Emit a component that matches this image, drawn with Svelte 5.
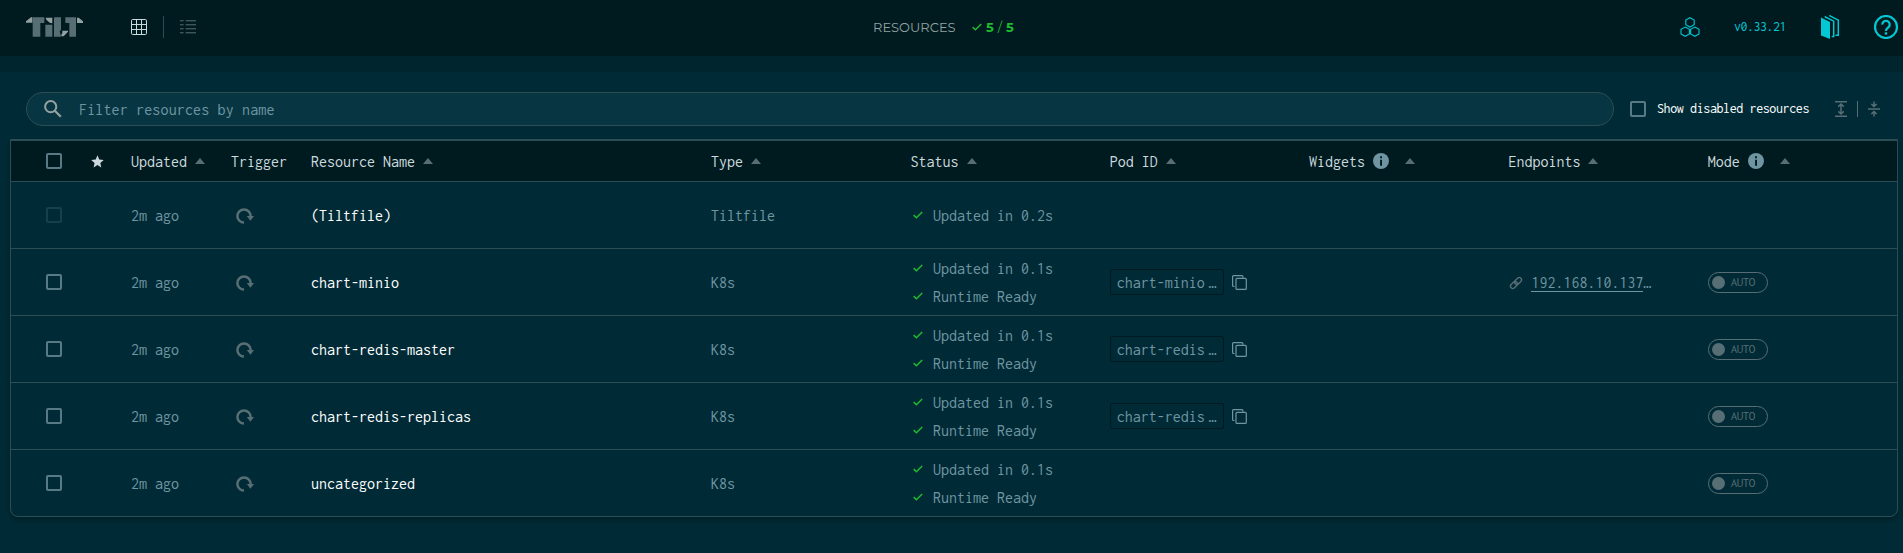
<script>
  const columns = [
    { label: 'Updated', sort: true },
    { label: 'Trigger' },
    { label: 'Resource Name', sort: true },
    { label: 'Type', sort: true },
    { label: 'Status', sort: true },
    { label: 'Pod ID', sort: true },
    { label: 'Widgets', info: true, sort: true },
    { label: 'Endpoints', sort: true },
    { label: 'Mode', info: true, sort: true }
  ];
  const rows = [
    { name: '(Tiltfile)', type: 'Tiltfile', status: ['Updated in 0.2s'], disabled: true },
    { name: 'chart-minio', type: 'K8s', status: ['Updated in 0.1s', 'Runtime Ready'], pod: 'chart-minio', endpoint: '192.168.10.137', auto: true },
    { name: 'chart-redis-master', type: 'K8s', status: ['Updated in 0.1s', 'Runtime Ready'], pod: 'chart-redis', auto: true },
    { name: 'chart-redis-replicas', type: 'K8s', status: ['Updated in 0.1s', 'Runtime Ready'], pod: 'chart-redis', auto: true },
    { name: 'uncategorized', type: 'K8s', status: ['Updated in 0.1s', 'Runtime Ready'], auto: true }
  ];
</script>

{#snippet check()}
  <svg class="check" width="10" height="8" viewBox="0 0 10 8"><path d="M.7 4.1 3.4 6.7 9.2 1" fill="none" stroke="#20ba31" stroke-width="1.5" /></svg>
{/snippet}

<div class="page">
  <header>
    <svg class="logo" width="58" height="20" viewBox="78 51 174 60" aria-label="Tilt">
      <path fill="#586e75" d="M98 52h35v17h-12v41H98zM136 74h21v36h-21zM162 52h21v38l-4 4 4 14v2h-21zM196 52h32v58h-20V69h-12z" />
      <path fill="#93a1a1" d="M78 68v-4l15-12h4v16zM137 53h20v17l-8-2-10-9zM187 92h17v3l-13 14h-7v-5l3-4zM231 53h5l13 11v5h-18z" />
    </svg>
    <nav>
      <svg width="16" height="16" viewBox="0 0 16 16" fill="none" stroke="#ccdade"><rect x=".5" y=".5" width="15" height="15" rx="1.2" /><path d="M5.5.5v15M10.5.5v15M.5 5.5h15M.5 10.5h15" /></svg>
      <i class="navline"></i>
      <svg width="16" height="14" viewBox="0 0 16 14" stroke="#586e75"><path d="M0 .8h3.6M5.6.8H16M0 4.8h3.6M5.6 4.8H16M0 8.8h3.6M5.6 8.8H16M0 12.8h3.6M5.6 12.8H16" /></svg>
    </nav>
    <div class="summary">
      <span class="title">RESOURCES</span>
      {@render check()}
      <span class="count"><b>5</b><em>/</em><b>5</b></span>
    </div>
    <div class="tools">
      <svg width="20" height="20" viewBox="0 0 20 20" fill="none" stroke="#03c7d3" stroke-width="1.1"><path d="M10 .7 14.2 3v4.7L10 10 5.8 7.700V3zM5.200 10.100 9.400 12.300v4.700L5.200 19.300 1 17v-4.700zM14.800 10.100 19 12.300v4.700l-4.200 2.300-4.200-2.300v-4.700z" /></svg>
      <span class="version">v0.33.21</span>
      <svg class="book" width="19" height="24" viewBox="0 0 19 24" fill="none" stroke="#03c7d3" stroke-width="1.5"><path fill="#03c7d3" stroke="none" d="M0 2.500 9 7v17L0 20.500z" /><path d="M4.500 3V2l8.200 4.200v15.300h-2M9 1.500V.9l8.300 4.300v15H14.500" /></svg>
      <svg class="help" width="24" height="24" viewBox="0 0 24 24"><circle cx="12" cy="12" r="11" fill="none" stroke="#03c7d3" stroke-width="2.2" /><path d="M8.300 9.600a3.700 3.700 0 1 1 6.500 2.300C13.300 13.400 12 13.700 12 16" fill="none" stroke="#03c7d3" stroke-width="2.2" /><path d="M10.800 17.300h2.400v2.300h-2.400z" fill="#03c7d3" /></svg>
    </div>
  </header>
  <div class="band"></div>

  <div class="filters">
    <div class="search">
      <svg width="18" height="18" viewBox="0 0 18 18" fill="none" stroke="#93a1a1" stroke-width="2"><circle cx="6.700" cy="6.700" r="5.600" /><path d="m10.800 10.800 6 6" stroke-width="2.300" /></svg>
      <span>Filter resources by name</span>
    </div>
    <span class="box"></span>
    <span class="show">Show disabled resources</span>
    <div class="expand">
      <svg width="12" height="16" viewBox="0 0 12 16" fill="none" stroke="#586e75" stroke-width="1.500"><path d="M0 .8h12M0 15.200h12M6 3v10M3.300 5.600 6 3l2.700 2.600M3.300 10.400 6 13l2.700-2.600" /></svg>
      <i></i>
      <svg width="12" height="16" viewBox="0 0 12 16" fill="none" stroke="#586e75" stroke-width="1.500"><path d="M0 8h12M6 .5V5M3.300 3 6 5.400 8.700 3M6 15.500V11M3.300 13 6 10.600 8.700 13" /></svg>
    </div>
  </div>

  <main>
    <div class="row head">
      <div><span class="box"></span></div>
      <div class="star"><svg width="13" height="13" viewBox="0 0 13 13"><path fill="#ccdade" d="m6.500.3 1.700 4.200 4.500.4-3.400 3 1 4.500-3.800-2.400-3.900 2.400 1-4.500-3.400-3 4.500-.4z" /></svg></div>
      {#each columns as c}
        <div>
          <span class="label">{c.label}</span>
          {#if c.info}
            <svg class="info" width="17" height="17" viewBox="0 0 17 17"><circle cx="8.500" cy="8.500" r="8" fill="#001014" /><circle cx="8" cy="8" r="8" fill="#7095a2" /><path fill="#001b20" d="M7.100 3.300h1.900v1.900H7.100zM7.100 6.700h1.900v6H7.100z" /></svg>
          {/if}
          {#if c.sort}
            <svg class="sort" class:after={c.info} width="10" height="6" viewBox="0 0 10 6"><path fill="#586e75" d="M5 0l5 6H0z" /></svg>
          {/if}
        </div>
      {/each}
    </div>
    {#each rows as r}
      <div class="row">
        <div><span class="box" class:dim={r.disabled}></span></div>
        <div></div>
        <div class="text">2m ago</div>
        <div class="text"><svg class="trigger" width="18" height="16" viewBox="0 0 18 16"><path d="M8 14.600A6.600 6.600 0 1 1 14.600 8" fill="none" stroke="#586e75" stroke-width="2.500" /><path fill="#586e75" d="M10.800 8h7.200l-3.600 4.800z" /></svg></div>
        <div class="text name">{r.name}</div>
        <div class="text">{r.type}</div>
        <div class="status">
          {#each r.status as s}<span>{@render check()}<span class="text">{s}</span></span>{/each}
        </div>
        <div>
          {#if r.pod}
            <span class="pod">{r.pod}<span>…</span></span>
            <svg width="15" height="15" viewBox="0 0 15 15" fill="none" stroke="#7095a2" stroke-width="1.200"><rect x="4" y="3.400" width="10.300" height="11" rx="1" /><path d="M2.500 11.500H1.600a1 1 0 0 1-1-1V1.600a1 1 0 0 1 1-1h8.300a1 1 0 0 1 1 1v1.200" /></svg>
          {/if}
        </div>
        <div></div>
        <div class="text">
          {#if r.endpoint}
            <svg class="link" width="14" height="14" viewBox="0 0 14 14" fill="none" stroke="#586e75" stroke-width="1.400"><g transform="rotate(-45 7 7)"><rect x=".2" y="4.700" width="7.800" height="4.600" rx="2.300" /><rect x="6" y="4.700" width="7.800" height="4.600" rx="2.300" /></g></svg>
            <span class="url">{r.endpoint}</span>…
          {/if}
        </div>
        <div>{#if r.auto}<span class="toggle"><i></i>AUTO</span>{/if}</div>
      </div>
    {/each}
  </main>
</div>

<style>
  :global(body) { background: #002b36; }
  .page { height: 553px; overflow: hidden; box-sizing: border-box; font: 16px/20px Inconsolata, "Liberation Mono", monospace; color: #7095a2; }
  svg { display: block; flex: none; }
  header { height: 56px; display: flex; align-items: center; background: #001b20; box-sizing: border-box; padding: 0 5px 2px 26px; }
  nav { display: flex; align-items: center; margin-left: 47px; }
  .navline { width: 1px; height: 22px; background: #2d4d55; margin: 0 16px; }
  .summary { display: flex; align-items: center; margin-left: 677px; font-family: Montserrat, "Open Sans", sans-serif; font-size: 13px; }
  .title { width: 99px; color: #93a1a1; }
  .count { color: #20ba31; margin-left: 4px; display: flex; gap: 4px; }
  .tools { display: flex; align-items: center; margin-left: auto; }
  .version { font-size: 14px; letter-spacing: -.5px; margin-left: 34px; width: 52px; color: #03c7d3; white-space: nowrap; }
  .book { margin-left: 35px; }
  .help { margin-left: 34px; }
  em { font-style: normal; }
  .band { height: 16px; background: #00252e; }
  .filters { height: 67px; display: flex; align-items: flex-start; padding: 20px 0 0 26px; box-sizing: border-box; }
  .search { width: 1588px; height: 34px; border: 1px solid #2d4d55; border-radius: 17px; background: #073642; display: flex; align-items: center; box-sizing: border-box; padding-left: 17px; gap: 17px; }
  .search span { padding-top: 1px; letter-spacing: .15px; }
  .box { width: 16px; height: 16px; border: 2px solid #587a85; border-radius: 2px; box-sizing: border-box; display: block; flex: none; }
  .dim { border-color: #193f4a; }
  .filters > .box { margin: 9px 0 0 16px; }
  .show { font-size: 14px; letter-spacing: -.39px; color: #fff; width: 152px; margin: 7px 0 0 11px; white-space: nowrap; }
  .expand { display: flex; align-items: center; margin: 9px 0 0 26px; }
  .expand i { width: 1px; height: 16px; background: #586e75; margin: 0 10px; }
  main { margin: 0 5px 0 10px; border: 1px solid #2d4d55; border-radius: 0 0 8px 8px; box-shadow: 0 3px 5px #001b2099; }
  .row { display: grid; grid-template-columns: 70px 50px 100px 80px 400px 199.500px 199.300px 199.300px 199.300px 199.300px 1fr; height: 67px; box-sizing: border-box; border-bottom: 1px solid #2d4d55; }
  .row:last-child { height: 66px; border-bottom: 0; }
  .row > div { display: flex; align-items: center; white-space: nowrap; min-width: 0; }
  .row > div:first-child { padding-left: 35px; }
  .row > .text { padding-top: 2px; }
  .head { height: 42px; background: #001b20; color: #ccdade; border-top: 1px solid #2d4d55; }
  .head .star { padding-left: 10px; }
  .label { padding-top: 1px; }
  .sort { margin-left: 8px; }
  .sort.after { margin-left: 15px; }
  .info { margin-left: 8px; }
  .trigger { margin-left: 5px; }
  .name { color: #fff; }
  .row > .status { flex-direction: column; align-items: flex-start; justify-content: center; gap: 6px; padding-left: .5px; }
  .status > span { display: flex; align-items: center; }
  .status .text { padding-top: 2px; }
  .status :global(.check) { margin: 0 10px 0 2px; }
  .pod { width: 114px; height: 26px; line-height: 26px; box-sizing: border-box; border: 1px solid #001b20; border-radius: 2px; padding-left: 6px; margin-right: 8px; }
  .pod span { margin-left: 4px; }
  .link { margin: 0 8px 0 1px; }
  .url { border-bottom: 1px solid #7095a2; line-height: 16px; }
  .toggle { width: 60px; height: 21px; border: 1px solid #586e75; border-radius: 11px; box-sizing: border-box; display: flex; align-items: center; padding-left: 3px; font-size: 13px; letter-spacing: -.5px; color: #586e75; }
  .toggle i { width: 13px; height: 13px; border-radius: 50%; background: #586e75; margin-right: 6px; }
</style>
